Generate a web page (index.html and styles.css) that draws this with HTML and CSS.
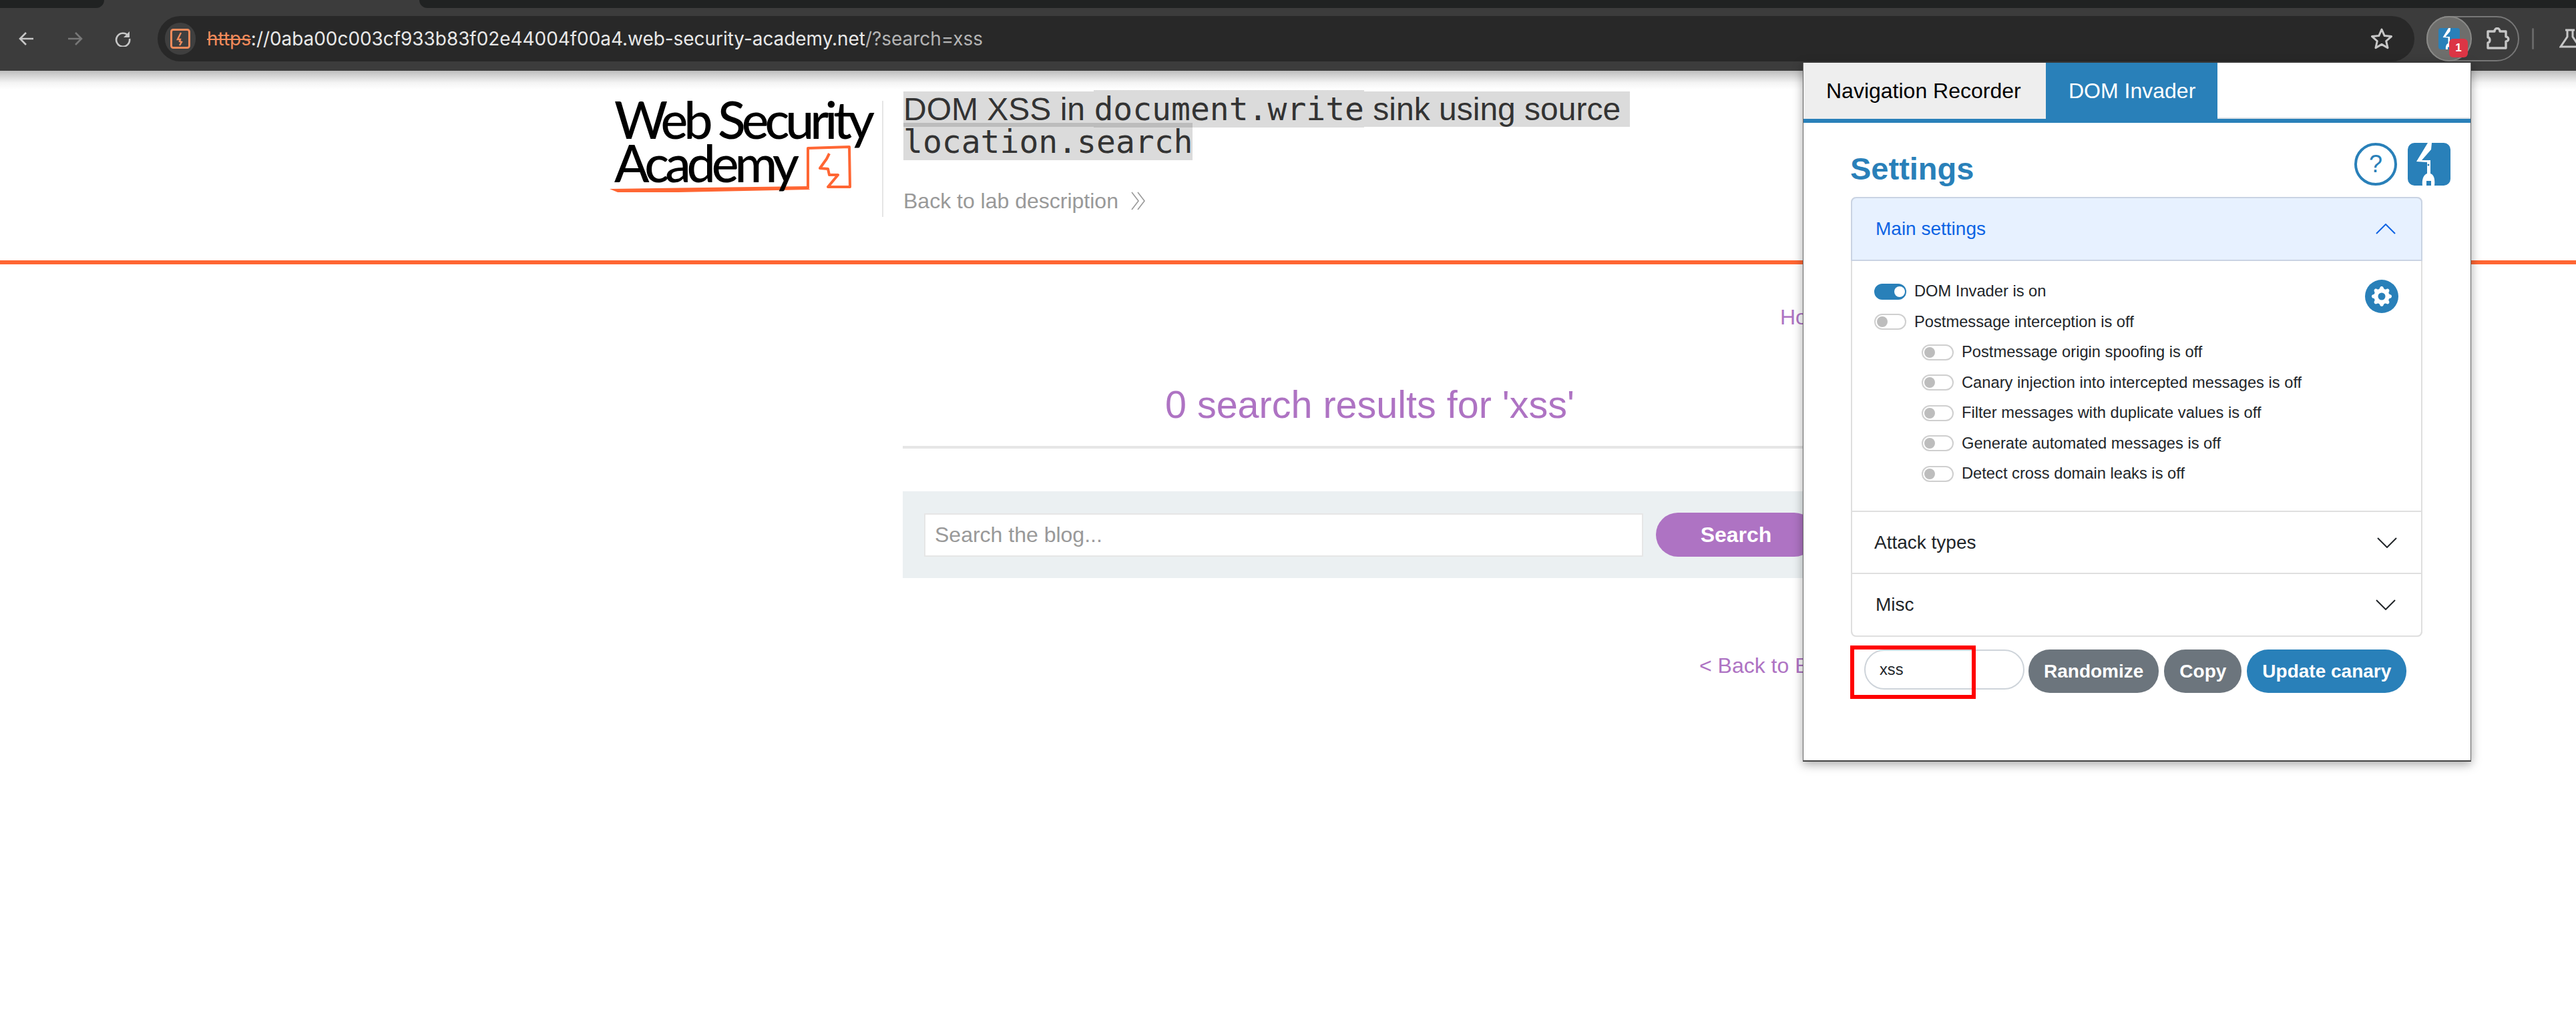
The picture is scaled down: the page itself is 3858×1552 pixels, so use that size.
FILE: index.html
```html
<!DOCTYPE html>
<html lang="en">
<head>
  <meta charset="UTF-8" />
  <title>DOM XSS in document.write sink using source location.search</title>
  <link rel="stylesheet" href="styles.css">
</head>
<body>
  <!-- browser chrome -->
  <div class="tabstrip">
    <div class="strip-left"></div>
    <div class="strip-tab"></div>
    <div class="strip-right"></div>
  </div>
  <div class="toolbar">
    <div class="nav-icons">
      <svg class="tool-icon" viewBox="0 0 24 24"><path d="M22 12H3M11 3l-9 9 9 9" fill="none" stroke="#c7c7c7" stroke-width="2.6"/></svg>
      <svg class="tool-icon" viewBox="0 0 24 24"><path d="M2 12h19M13 3l9 9-9 9" fill="none" stroke="#777" stroke-width="2.6"/></svg>
      <svg class="tool-icon" viewBox="0 0 24 24"><path d="M20 7.5A10 10 0 1 0 22 12" fill="none" stroke="#c7c7c7" stroke-width="2.6"/><path d="M22 1v9h-9z" fill="#c7c7c7"/></svg>
    </div>
    <div class="address">
      <div class="site-chip">
        <svg width="30" height="30" viewBox="0 0 30 30"><rect x="1.5" y="1.5" width="27" height="27" rx="3" fill="none" stroke="#f28b5b" stroke-width="3"/><path d="M16 6l-5 10h4l-1 3 3 1-3 5" fill="none" stroke="#f28b5b" stroke-width="2.4"/></svg>
      </div>
      <div class="url"><span class="url-scheme">https</span>://0aba00c003cf933b83f02e44004f00a4.web-security-academy.net<span class="url-query">/?search=xss</span></div>
      <svg class="star" width="34" height="34" viewBox="0 0 34 34"><path d="M17 3l4.2 9.6 10.3 1-7.8 6.9 2.3 10.2L17 25.400 8 30.700l2.300-10.200-7.800-6.900 10.300-1z" fill="none" stroke="#c7c7c7" stroke-width="3" stroke-linejoin="round"/></svg>
    </div>
    <div class="ext-pill">
      <div class="ext-active">
        <svg width="32" height="32" viewBox="0 0 64 64"><rect width="64" height="64" rx="8" fill="#2980b9"/><path d="M30 0L13 28l16 1v17c-6 2-8 10-7 18h6v-7h7v7h5c1-8 0-16-6-18V26H21l14-16 1-10z" fill="#fff"/></svg>
        <span class="badge">1</span>
      </div>
      <svg class="puzzle" width="36" height="34" viewBox="0 0 36 34"><path d="M3 6h10c0-6 8-6 8 0h9v8c5 0 5 7 0 7v10H3v-8c4 0 4-8 0-8z" fill="none" stroke="#c7c7c7" stroke-width="3.400" stroke-linejoin="round"/></svg>
    </div>
    <div class="tool-divider"></div>
    <svg class="flask" width="40" height="30" viewBox="0 0 40 30"><path d="M9 2h14M12 2v10L2 27h28L20 12V2" fill="none" stroke="#c7c7c7" stroke-width="3"/></svg>
  </div>

  <!-- lab page -->
  <header class="lab-header">
    <svg class="logo" width="413" height="150" viewBox="908 148 413 150">
      <path d="M913 283 L1208 279 L1213 284 L1013 288 L925 288Z" fill="#ff6633"/>
      <path d="M1210 282 L1210 222 L1272 220 L1273 280 L1240 280 L1255 262 L1242 262 L1240 253 L1228 252 L1238 238 L1242 230" fill="none" stroke="#ff6633" stroke-width="4" stroke-linejoin="round"/>
      <text class="logo-text" x="920" y="208" textLength="390" lengthAdjust="spacing">Web Security</text>
      <text class="logo-text" x="920" y="273" textLength="277" lengthAdjust="spacing">Academy</text>
    </svg>
    <div class="header-rule"></div>
    <div class="lab-title">
      <h2><span class="hl">DOM XSS in </span><code class="hl">document.write</code><span class="hl"> sink using source&nbsp;</span><br><code class="hl">location.search</code></h2>
      <a class="back-lab">Back to lab description
        <svg width="24" height="28" viewBox="0 0 24 28"><path d="M2 1l10 13L2 27M11 1l10 13-10 13" fill="none" stroke="#999" stroke-width="1.600"/></svg>
      </a>
    </div>
  </header>

  <main class="blog">
    <nav class="blog-nav">Home</nav>
    <h1>0 search results for 'xss'</h1>
    <div class="search-bar">
      <input class="search-input" type="text" placeholder="Search the blog...">
      <button class="search-btn" type="button">Search</button>
    </div>
    <a class="back-blog">&lt; Back to Blog</a>
  </main>

  <!-- extension popup -->
  <div class="popup">
    <div class="popup-tabs">
      <div class="popup-tab">Navigation Recorder</div>
      <div class="popup-tab active">DOM Invader</div>
    </div>
    <div class="settings-head">
      <h3>Settings</h3>
      <div class="head-icons">
        <div class="help">?</div>
        <svg width="64" height="64" viewBox="0 0 64 64"><rect width="64" height="64" rx="10" fill="#2980b9"/><path d="M30 0L13 28l16 1v17c-6 2-8 10-7 18h6v-7h7v7h5c1-8 0-16-6-18V26H21l14-16 1-10z" fill="#fff"/><circle cx="31" cy="33" r="1.500" fill="#2980b9"/></svg>
      </div>
    </div>
    <div class="accordion">
      <div class="acc-head open">
        <span>Main settings</span>
        <svg class="chev" width="30" height="16" viewBox="0 0 30 16"><path d="M1 15L15 1l14 14" fill="none" stroke="#0c63e4" stroke-width="2"/></svg>
      </div>
      <div class="acc-body">
        <div class="option-list">
          <div class="option"><span class="toggle on"></span>DOM Invader is on</div>
          <div class="option"><span class="toggle"></span>Postmessage interception is off</div>
          <div class="option sub"><span class="toggle"></span>Postmessage origin spoofing is off</div>
          <div class="option sub"><span class="toggle"></span>Canary injection into intercepted messages is off</div>
          <div class="option sub"><span class="toggle"></span>Filter messages with duplicate values is off</div>
          <div class="option sub"><span class="toggle"></span>Generate automated messages is off</div>
          <div class="option sub"><span class="toggle"></span>Detect cross domain leaks is off</div>
        </div>
        <div class="gear">
          <svg width="30" height="30" viewBox="0 0 16 16"><path fill="#fff" d="M9.405 1.05c-.413-1.4-2.397-1.4-2.81 0l-.1.34a1.464 1.464 0 0 1-2.105.872l-.31-.17c-1.283-.698-2.686.705-1.987 1.987l.169.311c.446.82.023 1.841-.872 2.105l-.34.1c-1.4.413-1.4 2.397 0 2.81l.34.1a1.464 1.464 0 0 1 .872 2.105l-.17.31c-.698 1.283.705 2.686 1.987 1.987l.311-.169a1.464 1.464 0 0 1 2.105.872l.1.34c.413 1.4 2.397 1.4 2.81 0l.1-.34a1.464 1.464 0 0 1 2.105-.872l.31.17c1.283.698 2.686-.705 1.987-1.987l-.169-.311a1.464 1.464 0 0 1 .872-2.105l.34-.1c1.4-.413 1.4-2.397 0-2.81l-.34-.1a1.464 1.464 0 0 1-.872-2.105l.17-.31c.698-1.283-.705-2.686-1.987-1.987l-.311.169a1.464 1.464 0 0 1-2.105-.872l-.1-.34zM8 10.93a2.929 2.929 0 1 1 0-5.86 2.929 2.929 0 0 1 0 5.858z"/></svg>
        </div>
      </div>
      <div class="acc-head">
        <span>Attack types</span>
        <svg class="chev" width="30" height="16" viewBox="0 0 30 16"><path d="M1 1l14 14L29 1" fill="none" stroke="#212529" stroke-width="2"/></svg>
      </div>
      <div class="acc-head last">
        <span>Misc</span>
        <svg class="chev" width="30" height="16" viewBox="0 0 30 16"><path d="M1 1l14 14L29 1" fill="none" stroke="#212529" stroke-width="2"/></svg>
      </div>
    </div>
    <div class="canary">
      <input class="canary-input" type="text" value="xss">
      <button class="pill grey" type="button">Randomize</button>
      <button class="pill grey" type="button">Copy</button>
      <button class="pill blue" type="button">Update canary</button>
      <div class="red-box"></div>
    </div>
  </div>
</body>
</html>
```

FILE: styles.css
```css
* {
  box-sizing: border-box;
}

html, body {
  height: 100%;
}

body {
  margin: 0;
  overflow: hidden;
  background: #fff;
  font-family: 'Liberation Sans', Arial, sans-serif;
  color: #333;
}

/* browser chrome */
.tabstrip {
  display: flex;
  height: 12px;
  background: #3c3c3c;
}

.strip-left {
  width: 156px;
  background: #202222;
  border-bottom-right-radius: 12px;
}

.strip-tab {
  width: 472px;
}

.strip-right {
  flex: 1;
  background: #202222;
  border-bottom-left-radius: 12px;
}

.toolbar {
  display: flex;
  align-items: center;
  height: 94px;
  padding: 0 0 2px 28px;
  background: #3c3c3c;
  overflow: hidden;
}

.nav-icons {
  display: flex;
  gap: 48px;
  margin-right: 40px;
}

.tool-icon {
  width: 24px;
  height: 24px;
}

.address {
  flex: none;
  display: flex;
  align-items: center;
  width: 3380px;
  height: 68px;
  padding: 0 32px 0 11px;
  background: #282828;
  border-radius: 34px;
}

.site-chip {
  display: flex;
  align-items: center;
  justify-content: center;
  width: 46px;
  height: 48px;
  background: #3f3f3f;
  border-radius: 24px;
}

.url {
  margin-left: 17px;
  font-family: Inter, sans-serif;
  font-size: 27.9px;
  color: #e8e8e8;
  white-space: nowrap;
}

.url-scheme {
  color: #f28b5b;
  text-decoration: line-through;
}

.url-query {
  color: #b4b4b4;
}

.star {
  margin-left: auto;
}

.ext-pill {
  flex: none;
  display: flex;
  align-items: center;
  width: 139px;
  height: 68px;
  margin-left: 18px;
  border: 2px solid #777;
  border-radius: 34px;
}

.ext-active {
  position: relative;
  display: flex;
  align-items: center;
  justify-content: center;
  width: 68px;
  height: 68px;
  margin-left: -2px;
  background: #6e6e6c;
  border: 2px solid #8a8a88;
  border-radius: 50%;
}

.badge {
  position: absolute;
  left: 32px;
  top: 32px;
  width: 28px;
  height: 28px;
  background: #dc3545;
  border-radius: 6px;
  color: #fff;
  font-size: 17px;
  font-weight: bold;
  line-height: 28px;
  text-align: center;
}

.puzzle {
  margin-left: 21px;
}

.tool-divider {
  flex: none;
  width: 3px;
  height: 32px;
  margin-left: 19px;
  background: #666;
  border-radius: 2px;
}

.flask {
  flex: none;
  margin-left: 38px;
}

/* lab header */
.lab-header {
  display: flex;
  align-items: flex-start;
  height: 290px;
  padding: 33px 0 0 908px;
  background: linear-gradient(#bdbdbd, #f4f4f4 18px, #fff 28px);
  border-bottom: 6px solid #ff6633;
}

.logo {
  flex: none;
  margin-top: 9px;
  overflow: visible;
}

.logo-text {
  font-family: Lato, sans-serif;
  font-size: 77px;
  font-weight: 500;
  fill: #000;
}

.header-rule {
  flex: none;
  width: 2px;
  height: 174px;
  margin-top: 12px;
  background: #e6e6e6;
}

.lab-title {
  margin-left: 30px;
}

.lab-title h2 {
  margin: 0;
  font-size: 48px;
  font-weight: normal;
  line-height: 49px;
  color: #333;
}

.lab-title code {
  font-family: 'DejaVu Sans Mono', monospace;
  font-size: 48px;
}

.hl {
  background: rgba(0, 0, 0, 0.14);
}

.back-lab {
  display: flex;
  align-items: center;
  gap: 18px;
  margin-top: 45px;
  font-size: 32px;
  line-height: 38px;
  color: #999;
}

/* blog body */
.blog {
  width: 1399px;
  margin-left: 1352px;
}

.blog-nav {
  margin-top: 60px;
  padding-left: 1314px;
  font-size: 32px;
  line-height: 38px;
  color: #ae73c3;
  white-space: nowrap;
}

.blog h1 {
  margin: 79px 0 0;
  padding-bottom: 29px;
  border-bottom: 4px solid #e6e6e6;
  font-size: 57.5px;
  font-weight: normal;
  line-height: 66px;
  text-align: center;
  color: #ae73c3;
}

.search-bar {
  display: flex;
  align-items: center;
  gap: 19px;
  height: 130px;
  margin-top: 64px;
  padding: 0 31px 0 32px;
  background: #ebf0f2;
}

.search-input {
  flex: 1;
  height: 65px;
  padding: 0 14px;
  background: #fff;
  border: 2px solid #e6e6e6;
  font-family: inherit;
  font-size: 32px;
}

.search-input::placeholder {
  color: #999;
}

.search-btn {
  flex: none;
  width: 240px;
  height: 66px;
  background: #ae73c3;
  border: none;
  border-radius: 33px;
  color: #fff;
  font-family: inherit;
  font-size: 32px;
  font-weight: bold;
}

.back-blog {
  display: block;
  margin-top: 112px;
  padding-left: 1193px;
  font-size: 32px;
  line-height: 38px;
  color: #ae73c3;
  white-space: nowrap;
}

/* extension popup */
.popup {
  position: absolute;
  left: 2700px;
  top: 94px;
  width: 1001px;
  height: 1047px;
  background: #fff;
  border: 1px solid #666;
  border-bottom: 2px solid #444;
  border-top: none;
  box-shadow: 0 4px 14px rgba(0, 0, 0, 0.35);
}

.popup-tabs {
  display: flex;
  height: 90px;
  background: linear-gradient(#fff 82px, #dee2e6 82px);
  border-bottom: 6px solid #2980b9;
}

.popup-tab {
  width: 363px;
  padding-left: 34px;
  background: #eee;
  font-size: 32px;
  line-height: 84px;
  color: #000;
}

.popup-tab.active {
  width: 257px;
  background: #2980b9;
  color: #fff;
}

.settings-head {
  display: flex;
  justify-content: space-between;
  height: 111px;
  padding: 30px 30px 0 70px;
}

.settings-head h3 {
  margin: 12px 0 0;
  font-size: 47px;
  font-weight: bold;
  line-height: 54px;
  color: #2980b9;
}

.head-icons {
  display: flex;
  align-items: center;
  gap: 16px;
  height: 64px;
}

.help {
  width: 64px;
  height: 64px;
  border: 4px solid #2980b9;
  border-radius: 50%;
  font-size: 36px;
  line-height: 56px;
  text-align: center;
  color: #2980b9;
}

.accordion {
  width: 856px;
  margin-left: 71px;
  border: 2px solid #dfdfdf;
  border-top: none;
  border-bottom: none;
  border-radius: 8px;
}

.acc-head {
  display: flex;
  align-items: center;
  justify-content: space-between;
  height: 93px;
  padding: 0 36px 0 33px;
  border-bottom: 2px solid #dfdfdf;
  font-size: 28px;
  color: #212529;
}

.acc-head.open {
  height: 96px;
  margin: 0 -2px;
  padding: 0 38px 0 35px;
  background: #e7f1ff;
  border: 2px solid #c9d3e3;
  border-radius: 8px 8px 0 0;
  color: #0c63e4;
}

.acc-head.last {
  height: 94px;
  border-radius: 0 0 8px 8px;
  margin: 0 -2px;
  padding: 0 38px 0 35px;
  border: 2px solid #dfdfdf;
  border-top: none;
}

.acc-body {
  display: flex;
  justify-content: space-between;
  height: 376px;
  padding: 23px 34px 0 33px;
  border-bottom: 2px solid #dfdfdf;
}

.option {
  display: flex;
  align-items: center;
  height: 45.5px;
  font-size: 23.7px;
  color: #212529;
}

.option.sub {
  padding-left: 71px;
}

.toggle {
  position: relative;
  flex: none;
  width: 48px;
  height: 24px;
  margin-right: 12px;
  background: #fff;
  border: 2px solid #cfcfcf;
  border-radius: 12px;
}

.toggle::after {
  content: "";
  position: absolute;
  left: 2px;
  top: 2px;
  width: 16px;
  height: 16px;
  background: #bdbdbd;
  border-radius: 50%;
}

.toggle.on {
  background: #2980b9;
  border-color: #2980b9;
}

.toggle.on::after {
  left: 28px;
  background: #fff;
}

.gear {
  display: flex;
  align-items: center;
  justify-content: center;
  width: 50px;
  height: 50px;
  margin-top: 5px;
  background: #2980b9;
  border-radius: 50%;
}

.canary {
  position: relative;
  display: flex;
  align-items: flex-start;
  gap: 8px;
  margin: 19px 0 0 71px;
  padding-left: 20px;
}

.canary-input {
  width: 240px;
  height: 60px;
  margin-right: -2px;
  padding: 0 21px;
  background: #fff;
  border: 2px solid #ced4da;
  border-radius: 30px;
  font-family: inherit;
  font-size: 23.7px;
  color: #212529;
}

.pill {
  height: 65px;
  padding: 0 23px;
  border: none;
  border-radius: 32px;
  color: #fff;
  font-family: inherit;
  font-size: 28px;
  font-weight: bold;
}

.pill.grey {
  background: #6c757d;
}

.pill.blue {
  background: #2980b9;
}

.red-box {
  position: absolute;
  left: -1px;
  top: -6px;
  width: 188px;
  height: 80px;
  border: 6px solid #f00;
}
```
